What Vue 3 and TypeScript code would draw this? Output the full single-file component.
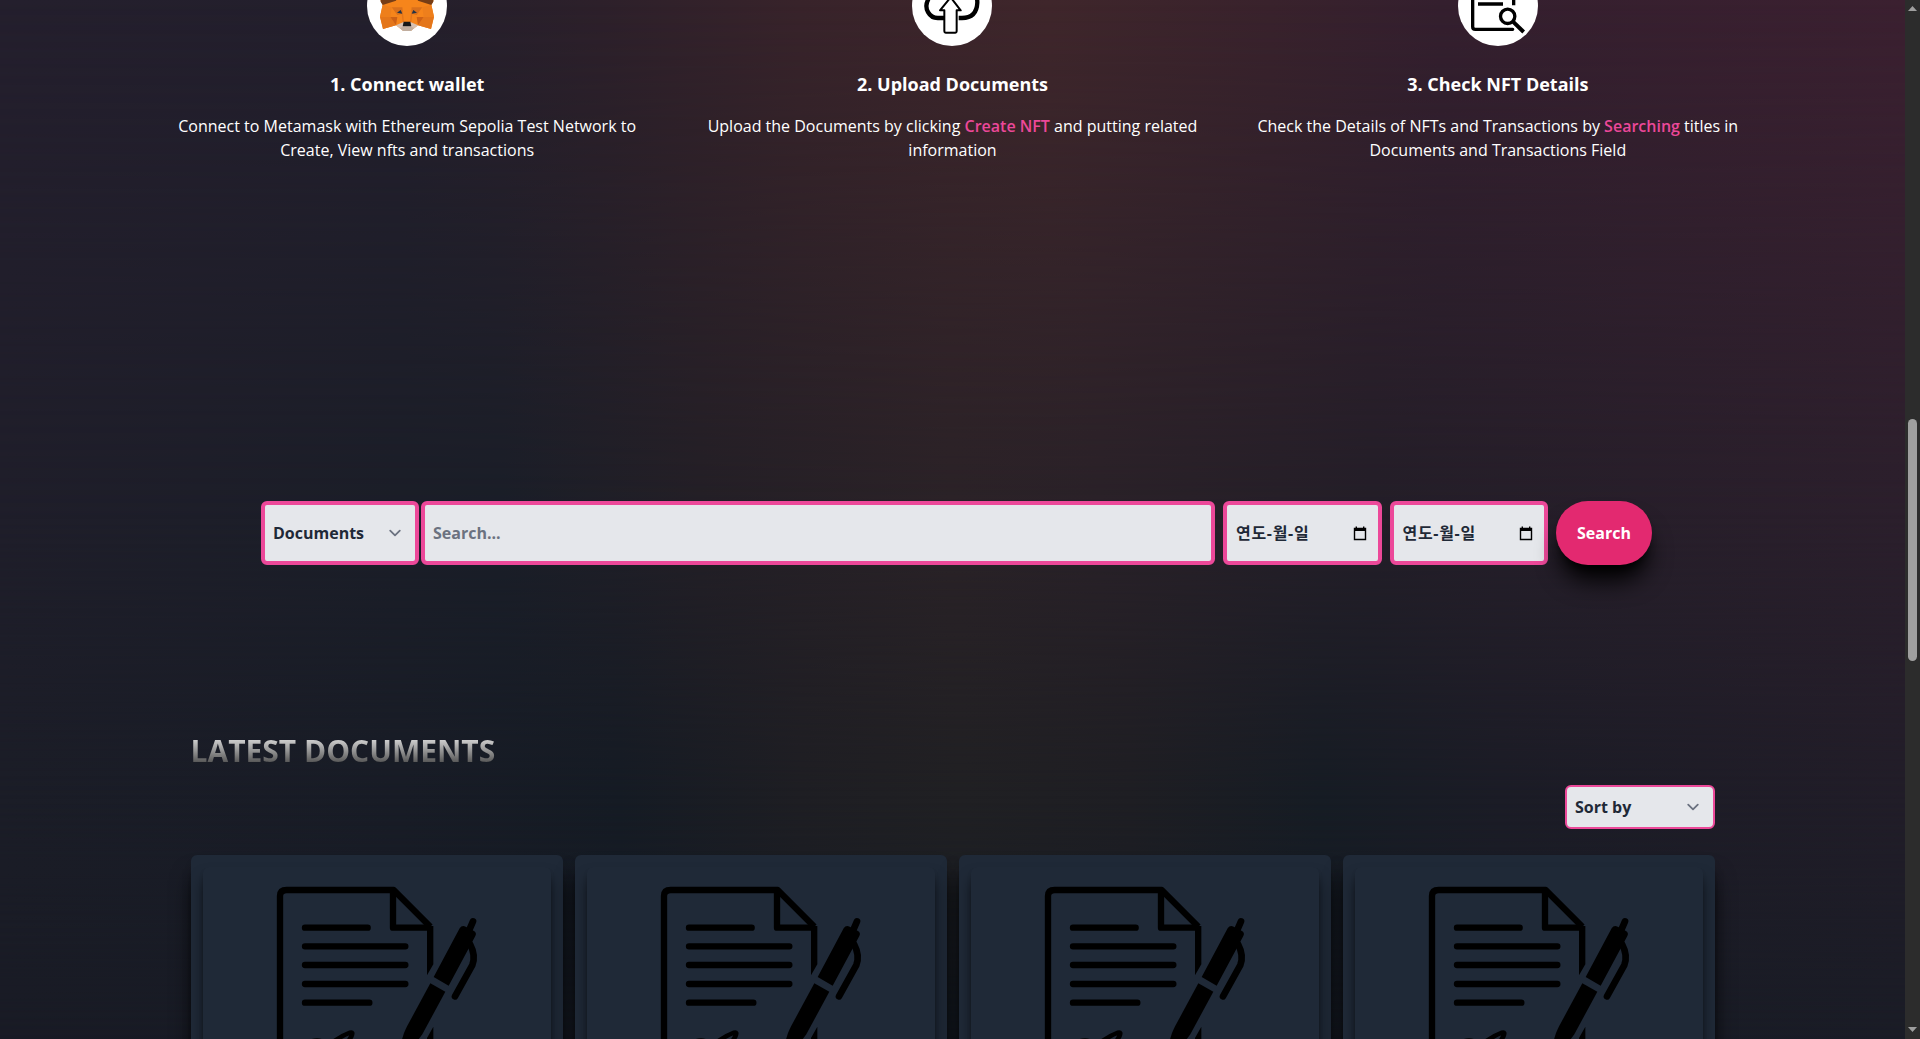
<script setup lang="ts">
interface Step {
  icon: 'fox' | 'upload' | 'details'
  title: string
  before: string
  link: string
  after: string
}

const steps: Step[] = [
  {
    icon: 'fox',
    title: '1. Connect wallet',
    before: 'Connect to Metamask with Ethereum Sepolia Test Network to Create, View nfts and transactions',
    link: '',
    after: '',
  },
  {
    icon: 'upload',
    title: '2. Upload Documents',
    before: 'Upload the Documents by clicking ',
    link: 'Create NFT',
    after: ' and putting related information',
  },
  {
    icon: 'details',
    title: '3. Check NFT Details',
    before: 'Check the Details of NFTs and Transactions by ',
    link: 'Searching',
    after: ' titles in Documents and Transactions Field',
  },
]

const dates = ['from', 'to']
const cards = [1, 2, 3, 4]
</script>

<template>
  <div class="window">
    <main class="page">
      <div class="glow glow-4"></div>
      <div class="glow glow-3"></div>
      <div class="glow glow-2"></div>
      <div class="glow glow-1"></div>

      <section class="steps">
        <article v-for="step in steps" :key="step.icon" class="step">
          <div class="badge">
            <svg v-if="step.icon === 'fox'" viewBox="21 -102 240 240">
              <path d="M62 -60 L120 -22 L162 -22 L220 -60 L224 -20 L220 4 L214 14 L222 50 L213 87 L174 76 L153 92 L129 92 L108 76 L69 87 L60 50 L68 14 L62 4 L58 -20 Z" fill="#f6851b" />
              <path d="M62 -60 L120 -22 L108 2 L68 15 L62 5 Z M220 -60 L162 -22 L174 2 L214 15 L220 5 Z" fill="#763d16" />
              <path d="M60 50 L91 51 L108 76 L69 87 Z M222 50 L191 51 L174 76 L213 87 Z" fill="#e4761b" />
              <path d="M68 14 L95 22 L91 51 L60 50 Z M214 14 L187 22 L191 51 L222 50 Z" fill="#ee7f1c" />
              <path d="M91 51 L112 51 L108 76 Z M191 51 L170 51 L174 76 Z" fill="#cd6116" />
              <path d="M95 22 L127 22 L128 41 L112 45 Z M187 22 L155 22 L154 41 L170 45 Z" fill="#d9701c" />
              <path d="M127 22 L132 66 L128 67 L125 42 Z M155 22 L150 66 L154 67 L157 42 Z" fill="#e4761b" />
              <path d="M111 38 L122 30 L127 41 Z M171 38 L160 30 L155 41 Z" fill="#233447" />
              <path d="M108 76 L129 67 L153 67 L174 76 L153 92 L129 92 Z" fill="#d7c1b3" />
              <path d="M120 84 L129 80 L153 80 L162 84 L153 93 L129 93 Z" fill="#c0ad9e" />
              <path d="M131 65 L151 65 L154 79 L128 79 Z" fill="#161616" />
            </svg>
            <svg v-else-if="step.icon === 'upload'" viewBox="36 -102 240 240" fill="none" stroke="#000">
              <path d="M136 54 H114 A34 36 0 0 1 84 0 Q88 -30 120 -38 Q156 -70 194 -38 Q232 -30 232 8 Q230 54 186 54 H176" stroke-width="13" />
              <path d="M152 -8 L182 31 H170 V94 Q170 98 166 98 H137 Q133 98 133 94 V31 H120 Z" fill="#fff" stroke-width="6" stroke-linejoin="round" />
            </svg>
            <svg v-else viewBox="54 -102 240 240" fill="none" stroke="#000" stroke-width="10">
              <path d="M98 -60 V80 Q98 88 106 88 H218" stroke-linecap="round" />
              <path d="M98 -60 H221 V16" />
              <path d="M114 12 H189" />
              <circle cx="203" cy="49" r="21.5" />
              <path d="M219 65 L251 96" stroke-width="12" />
            </svg>
          </div>
          <h3>{{ step.title }}</h3>
          <p>{{ step.before }}<a v-if="step.link">{{ step.link }}</a>{{ step.after }}</p>
        </article>
      </section>

      <form class="search" @submit.prevent>
        <div class="field kind">
          <span>Documents</span>
          <svg class="chevron" viewBox="0 0 20 20"><path d="M6 8l4 4 4-4" /></svg>
        </div>
        <input class="field query" type="text" placeholder="Search..." />
        <div v-for="d in dates" :key="d" class="field date">
          <span>연도-월-일</span>
          <svg class="calendar" viewBox="0 0 14 15">
            <path d="M1.5 2.5 H12.5 V13.5 H1.5 Z" fill="none" stroke="#000" stroke-width="1.4" />
            <path d="M1 2 H13 V5 H1 Z M2.6 .6 H4 V2.5 H2.6 Z M10 .6 H11.4 V2.5 H10 Z" />
          </svg>
        </div>
        <button type="submit">Search</button>
      </form>

      <section class="latest">
        <h2>LATEST DOCUMENTS</h2>
        <div class="toolbar">
          <div class="field sort">
            <span>Sort by</span>
            <svg class="chevron" viewBox="0 0 20 20"><path d="M6 8l4 4 4-4" /></svg>
          </div>
        </div>
        <div class="cards">
          <article v-for="c in cards" :key="c" class="card">
            <div class="thumb">
              <svg viewBox="69 81 1044 1044" fill="none" stroke="#000" stroke-width="19">
                <path d="M300 900 V168 Q300 150 320 150 H641 L751 260" stroke-linejoin="round" />
                <path d="M639 150 V263 H750" stroke-linejoin="round" />
                <path d="M741 258 H760 V373 L741 406 Z M760 560 V900 H741 V594 Z" fill="#000" stroke="none" />
                <path d="M375 263 H563 M375 319 H676 M375 375 H676 M375 432 H676 M375 488 H568" stroke-linecap="round" />
                <path d="M867 272 L879 244" stroke-width="20" stroke-linecap="round" />
                <path d="M761 411 L839 265 Q846 254 857 260 L882 273 Q891 279 886 288 L878 303 L806 437 Z" fill="#000" stroke="none" />
                <path d="M870 312 Q888 346 877 375 L825 469" stroke-width="20" stroke-linecap="round" />
                <path d="M751 430 L796 455 L727 583 Q700 620 655 670 Q660 600 680 561 Z" fill="#000" stroke="none" />
                <path d="M396 604 Q412 599 424 604 M462 604 Q486 587 510 578 Q521 575 514 589 L498 617" stroke-width="14" stroke-linecap="round" />
              </svg>
            </div>
          </article>
        </div>
      </section>
    </main>

    <aside class="scrollbar">
      <svg viewBox="0 0 9 5"><path d="M4.5 0 L9 5 H0 Z" /></svg>
      <div class="track"><div class="thumb-bar"></div></div>
      <svg viewBox="0 0 9 5"><path d="M0 0 H9 L4.5 5 Z" /></svg>
    </aside>
  </div>
</template>

<style>
body {
  margin: 0;
  background: #1a1b26;
}
</style>

<style scoped>
* {
  box-sizing: border-box;
}

.window {
  display: flex;
  width: 1920px;
  height: 1039px;
  overflow: hidden;
  font-family: 'Open Sans', 'Noto Sans CJK KR', sans-serif;
  font-size: 16px;
  line-height: 24px;
  color: #fff;
}

.page {
  position: relative;
  z-index: 0;
  width: 1905px;
  height: 1039px;
  overflow: hidden;
}

/* Horizontal colour bands that fade into each other down the page. */
.glow {
  position: absolute;
  inset: 0;
  z-index: -1;
}

.glow-1 {
  background: linear-gradient(90deg, #241f2d 0, #231f2c 400px, #2d202a 600px, #38232a 800px, #3f262b 1050px, #39222c 1270px, #341f2e 1440px, #3b2030 1905px);
  mask-image: linear-gradient(#000 0, transparent 520px);
}

.glow-2 {
  background: linear-gradient(90deg, #1f1e2a 0, #1b1e28 400px, #1a1e28 500px, #231f26 700px, #2a2227 950px, #292128 1100px, #231e28 1370px, #2b1f2c 1905px);
  mask-image: linear-gradient(#000 520px, transparent 800px);
}

.glow-3 {
  background: linear-gradient(90deg, #1b1d27 0, #181c26 400px, #151b24 620px, #1e1e23 800px, #202023 960px, #1e1e23 1130px, #161c24 1320px, #1b1c26 1500px, #211d28 1905px);
  mask-image: linear-gradient(#000 800px, transparent 1039px);
}

.glow-4 {
  background: linear-gradient(90deg, #191b25, #151b23 950px, #1a1c26);
}

.steps {
  display: flex;
  width: 1636px;
  height: 196px;
  margin: -34px 0 0 134.5px;
}

.step {
  display: flex;
  flex: 1;
  flex-direction: column;
  align-items: center;
  text-align: center;
}

.badge {
  width: 80px;
  height: 80px;
  overflow: hidden;
  border-radius: 50%;
  background: #fff;
}

.badge svg {
  display: block;
  width: 80px;
  height: 80px;
}

h3 {
  margin: 24px 0 16px;
  font-size: 18px;
  font-weight: 700;
  line-height: 28px;
}

p {
  width: 497px;
  margin: 0;
}

p a {
  color: #ec4899;
  font-weight: 600;
}

.search {
  display: flex;
  height: 64px;
  margin: 339px 0 0 261px;
}

.field {
  display: flex;
  align-items: center;
  justify-content: space-between;
  border: 4px solid #ec4899;
  border-radius: 6px;
  background: #e5e7eb;
  color: #1f2937;
  font: 700 16px/24px 'Open Sans', 'Noto Sans CJK KR', sans-serif;
}

.kind {
  width: 158px;
  padding: 0 8px;
}

.chevron {
  width: 24px;
  height: 24px;
  fill: none;
  stroke: #6b7280;
  stroke-width: 1.5;
  stroke-linecap: round;
  stroke-linejoin: round;
}

.query {
  width: 794px;
  margin-left: 2px;
  padding: 0 8px;
  outline: none;
}

.query::placeholder {
  color: #6b7280;
  opacity: 1;
}

.date {
  width: 158.5px;
  margin-left: 8px;
  padding: 0 11px 0 9px;
}

.date span {
  letter-spacing: 0.7px;
}

.calendar {
  width: 14px;
  height: 15px;
}

button {
  position: relative;
  width: 96px;
  height: 64px;
  margin-left: 8px;
  padding: 0;
  border: 0;
  border-radius: 32px;
  background: #e32970;
  box-shadow: 0 20px 25px -5px #000, 0 8px 10px -6px #000;
  color: #fff;
  font: 700 16px/24px 'Open Sans', sans-serif;
}

.latest {
  width: 1524px;
  margin: 168px 0 0 191px;
}

h2 {
  width: max-content;
  margin: 0 0 0 -0.5px;
  background: linear-gradient(#f2f2f2, #343434);
  background-clip: text;
  color: transparent;
  font-size: 30px;
  font-weight: 700;
  line-height: 36px;
}

.toolbar {
  display: flex;
  justify-content: flex-end;
  margin-top: 16px;
}

.sort {
  width: 150px;
  height: 44px;
  padding: 0 8px;
  border-width: 2px;
}

.cards {
  display: flex;
  gap: 12px;
  margin-top: 26px;
}

.card {
  width: 372px;
  height: 480px;
  padding: 12px;
  border-radius: 6px;
  background: #1f2937;
  box-shadow: 0 20px 25px -5px #000, 0 8px 10px -6px #000;
}

.thumb {
  width: 348px;
  height: 348px;
  border-radius: 6px;
  background: #1f2937;
  box-shadow: 0 10px 15px -3px rgba(0, 0, 0, 0.8), 0 4px 6px -4px rgba(0, 0, 0, 0.8);
}

.thumb svg {
  display: block;
  width: 348px;
  height: 348px;
}

.scrollbar {
  display: flex;
  flex-direction: column;
  align-items: center;
  justify-content: space-between;
  width: 15px;
  height: 1039px;
  padding: 6px 0 7px;
  background: #2c2c2c;
}

.scrollbar svg {
  width: 9px;
  height: 5px;
  fill: #9f9f9f;
}

.track {
  flex: 1;
  padding-top: 408px;
}

.thumb-bar {
  width: 9px;
  height: 242px;
  border-radius: 5px;
  background: #9f9f9f;
}
</style>
